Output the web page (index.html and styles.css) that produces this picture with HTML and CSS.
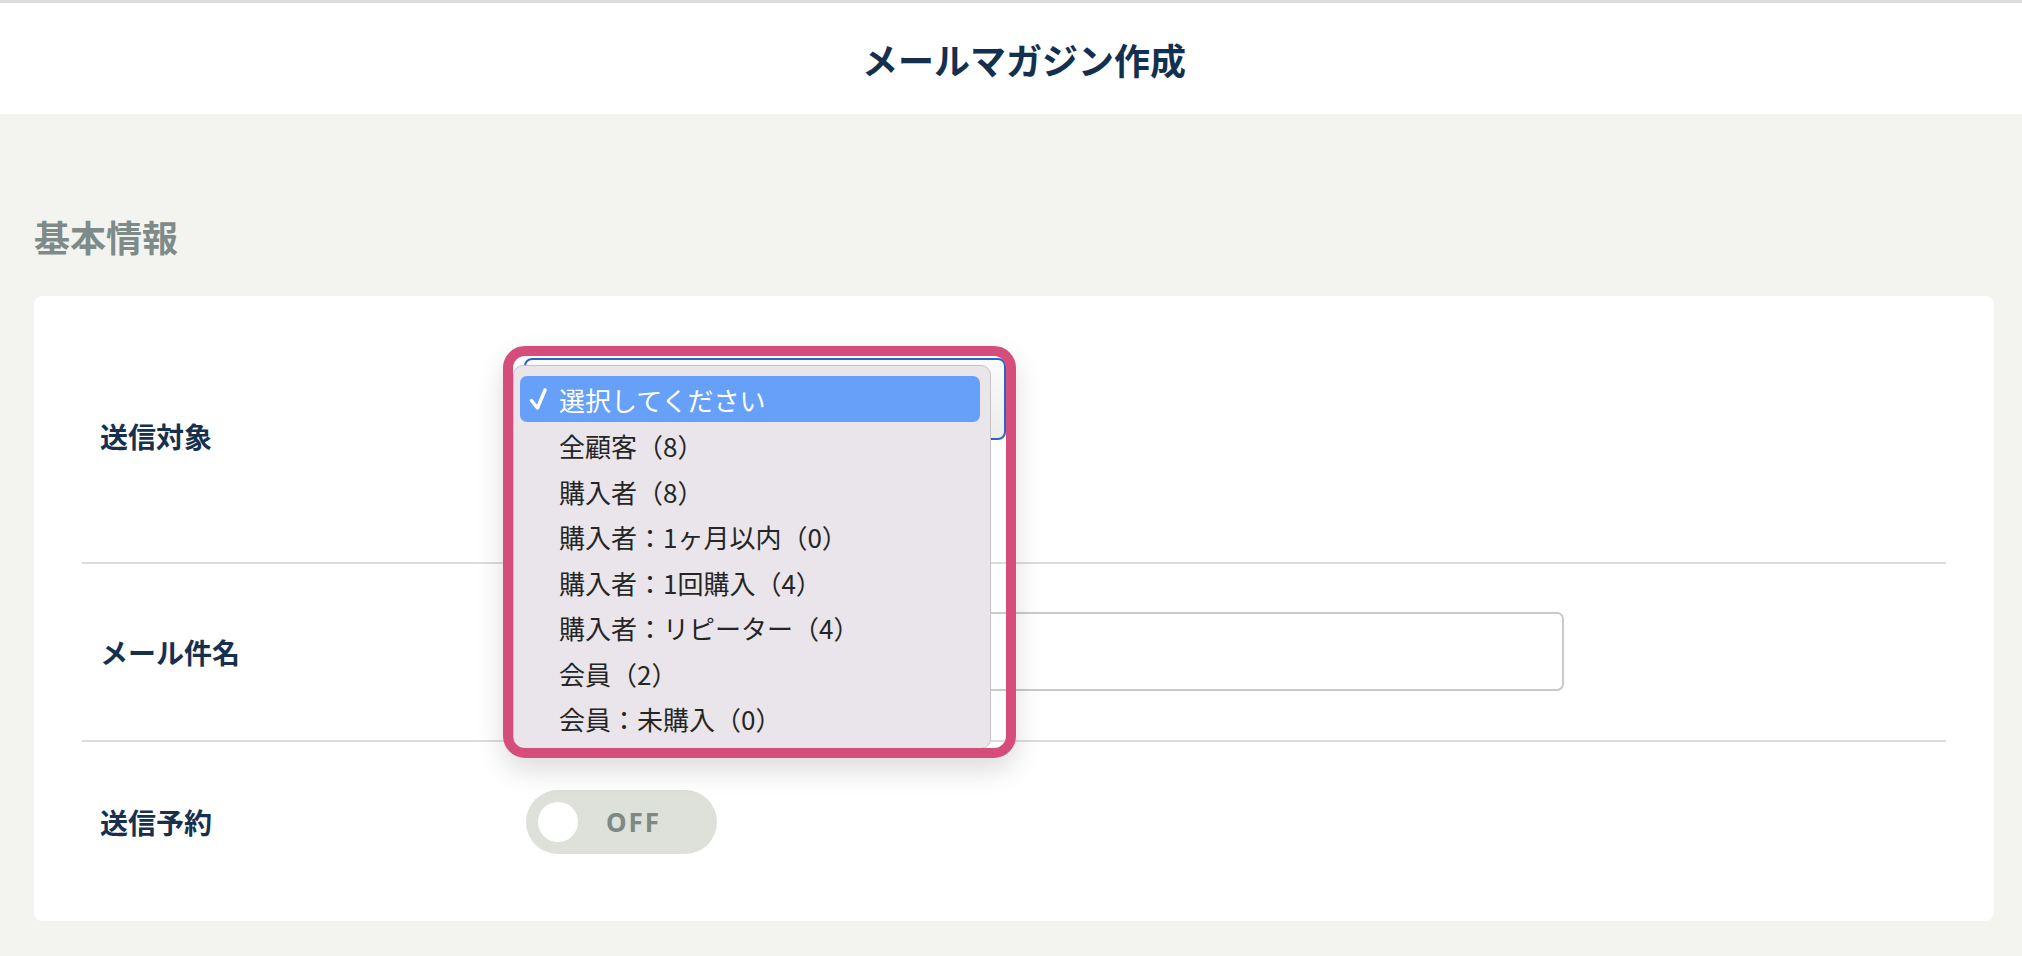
FILE: index.html
```html
<!DOCTYPE html>
<html lang="ja">
<head>
<meta charset="utf-8">
<title>メールマガジン作成</title>
<link rel="stylesheet" href="styles.css">
</head>
<body>
<header class="page-header">
  <h1 class="page-title">メールマガジン作成</h1>
</header>
<main class="page-main">
  <h2 class="section-title">基本情報</h2>
  <section class="card">
    <div class="form-row row-target">
      <div class="form-label">送信対象</div>
      <div class="form-field field-select">
        <div class="select-wrap">
          <div class="select-box"></div>
          <div class="dropdown-menu">
            <div class="dropdown-item is-selected">
              <svg class="check" viewBox="0 0 18 24" width="18" height="24"><polyline points="2.5,13.5 8.5,21 16,3" fill="none" stroke="#ffffff" stroke-width="3.4" stroke-linecap="round" stroke-linejoin="round"/></svg>
              選択してください
            </div>
            <div class="dropdown-item">全顧客（8）</div>
            <div class="dropdown-item">購入者（8）</div>
            <div class="dropdown-item">購入者：1ヶ月以内（0）</div>
            <div class="dropdown-item">購入者：1回購入（4）</div>
            <div class="dropdown-item">購入者：リピーター（4）</div>
            <div class="dropdown-item">会員（2）</div>
            <div class="dropdown-item">会員：未購入（0）</div>
          </div>
          <div class="highlight-frame"></div>
        </div>
      </div>
    </div>
    <div class="form-row row-subject">
      <div class="form-label">メール件名</div>
      <div class="form-field">
        <div class="text-input"></div>
      </div>
    </div>
    <div class="form-row row-schedule">
      <div class="form-label">送信予約</div>
      <div class="form-field">
        <div class="toggle">
          <span class="toggle-knob"></span>
          <span class="toggle-text">OFF</span>
        </div>
      </div>
    </div>
  </section>
</main>
</body>
</html>
```

FILE: styles.css
```css
* {
  box-sizing: border-box;
}

html, body {
  margin: 0;
  padding: 0;
}

body {
  background: #f3f4f0;
  font-family: "Noto Sans CJK JP", "Noto Sans", sans-serif;
  color: #222222;
  min-height: 956px;
}

.page-header {
  background: #ffffff;
  border-top: 3px solid #dddddd;
  height: 114px;
  padding-left: 26px;
  display: flex;
  align-items: center;
  justify-content: center;
}

.page-title {
  margin: 0;
  font-size: 36px;
  font-weight: 700;
  line-height: 1;
  color: #13304f;
}

.page-main {
  padding: 0 28px 0 34px;
}

.section-title {
  margin: 0;
  padding-top: 95px;
  padding-bottom: 33px;
  font-size: 36px;
  line-height: 54px;
  font-weight: 700;
  color: #7f8b88;
}

.card {
  background: #ffffff;
  border-radius: 8px;
  padding: 0 48px;
}

.form-row {
  display: grid;
  grid-template-columns: 442px 1fr;
  align-items: center;
}

.row-target {
  padding: 62px 0 48px;
  border-bottom: 2px solid #dcdcd8;
}

.row-subject {
  padding: 48px 0 49px;
  border-bottom: 2px solid #dcdcd8;
}

.row-schedule {
  padding: 48px 0 67px;
}

.form-label {
  padding-left: 18px;
  font-size: 28px;
  font-weight: 700;
  color: #17304e;
  line-height: 40px;
}

.field-select {
  min-height: 156px;
  align-self: start;
}

.select-wrap {
  position: relative;
  width: 482px;
  height: 82px;
  z-index: 2;
}

.select-box {
  width: 482px;
  height: 82px;
  border: 2px solid #2c62c4;
  border-radius: 8px;
  background: linear-gradient(#fbfbfb, #ececec);
}

.dropdown-menu {
  position: absolute;
  left: -11px;
  top: 7px;
  width: 478px;
  height: 384px;
  background: #e9e5ea;
  border: 1px solid #c6c3c7;
  border-radius: 10px;
  padding: 10px 10px 8px 6px;
}

.dropdown-item {
  position: relative;
  height: 45.5px;
  display: flex;
  align-items: center;
  padding-left: 39px;
  font-size: 26px;
  color: #252525;
  white-space: nowrap;
}

.dropdown-item.is-selected {
  height: 46px;
  background: #66a0f8;
  border-radius: 7px;
  color: #ffffff;
  margin-bottom: 1px;
}

.check {
  position: absolute;
  left: 9px;
  top: 11px;
}

.highlight-frame {
  position: absolute;
  left: -21px;
  top: -12px;
  width: 513px;
  height: 412px;
  border: 10px solid #d64c7a;
  border-radius: 22px;
  box-shadow: 0 12px 28px rgba(0, 0, 0, 0.14);
  pointer-events: none;
}

.text-input {
  width: 1040px;
  height: 79px;
  border: 2px solid #c8cbc7;
  border-radius: 7px;
  background: #ffffff;
}

.toggle {
  width: 191px;
  height: 64px;
  margin-left: 2px;
  border-radius: 32px;
  background: #dee0da;
  display: flex;
  align-items: center;
  padding-left: 12px;
}

.toggle-knob {
  width: 40px;
  height: 40px;
  border-radius: 50%;
  background: #ffffff;
  flex: none;
}

.toggle-text {
  margin-left: 28px;
  font-family: "Noto Sans", "Open Sans", sans-serif;
  font-size: 26px;
  font-weight: 700;
  letter-spacing: 2px;
  color: #7c8985;
  line-height: 1;
}
```
